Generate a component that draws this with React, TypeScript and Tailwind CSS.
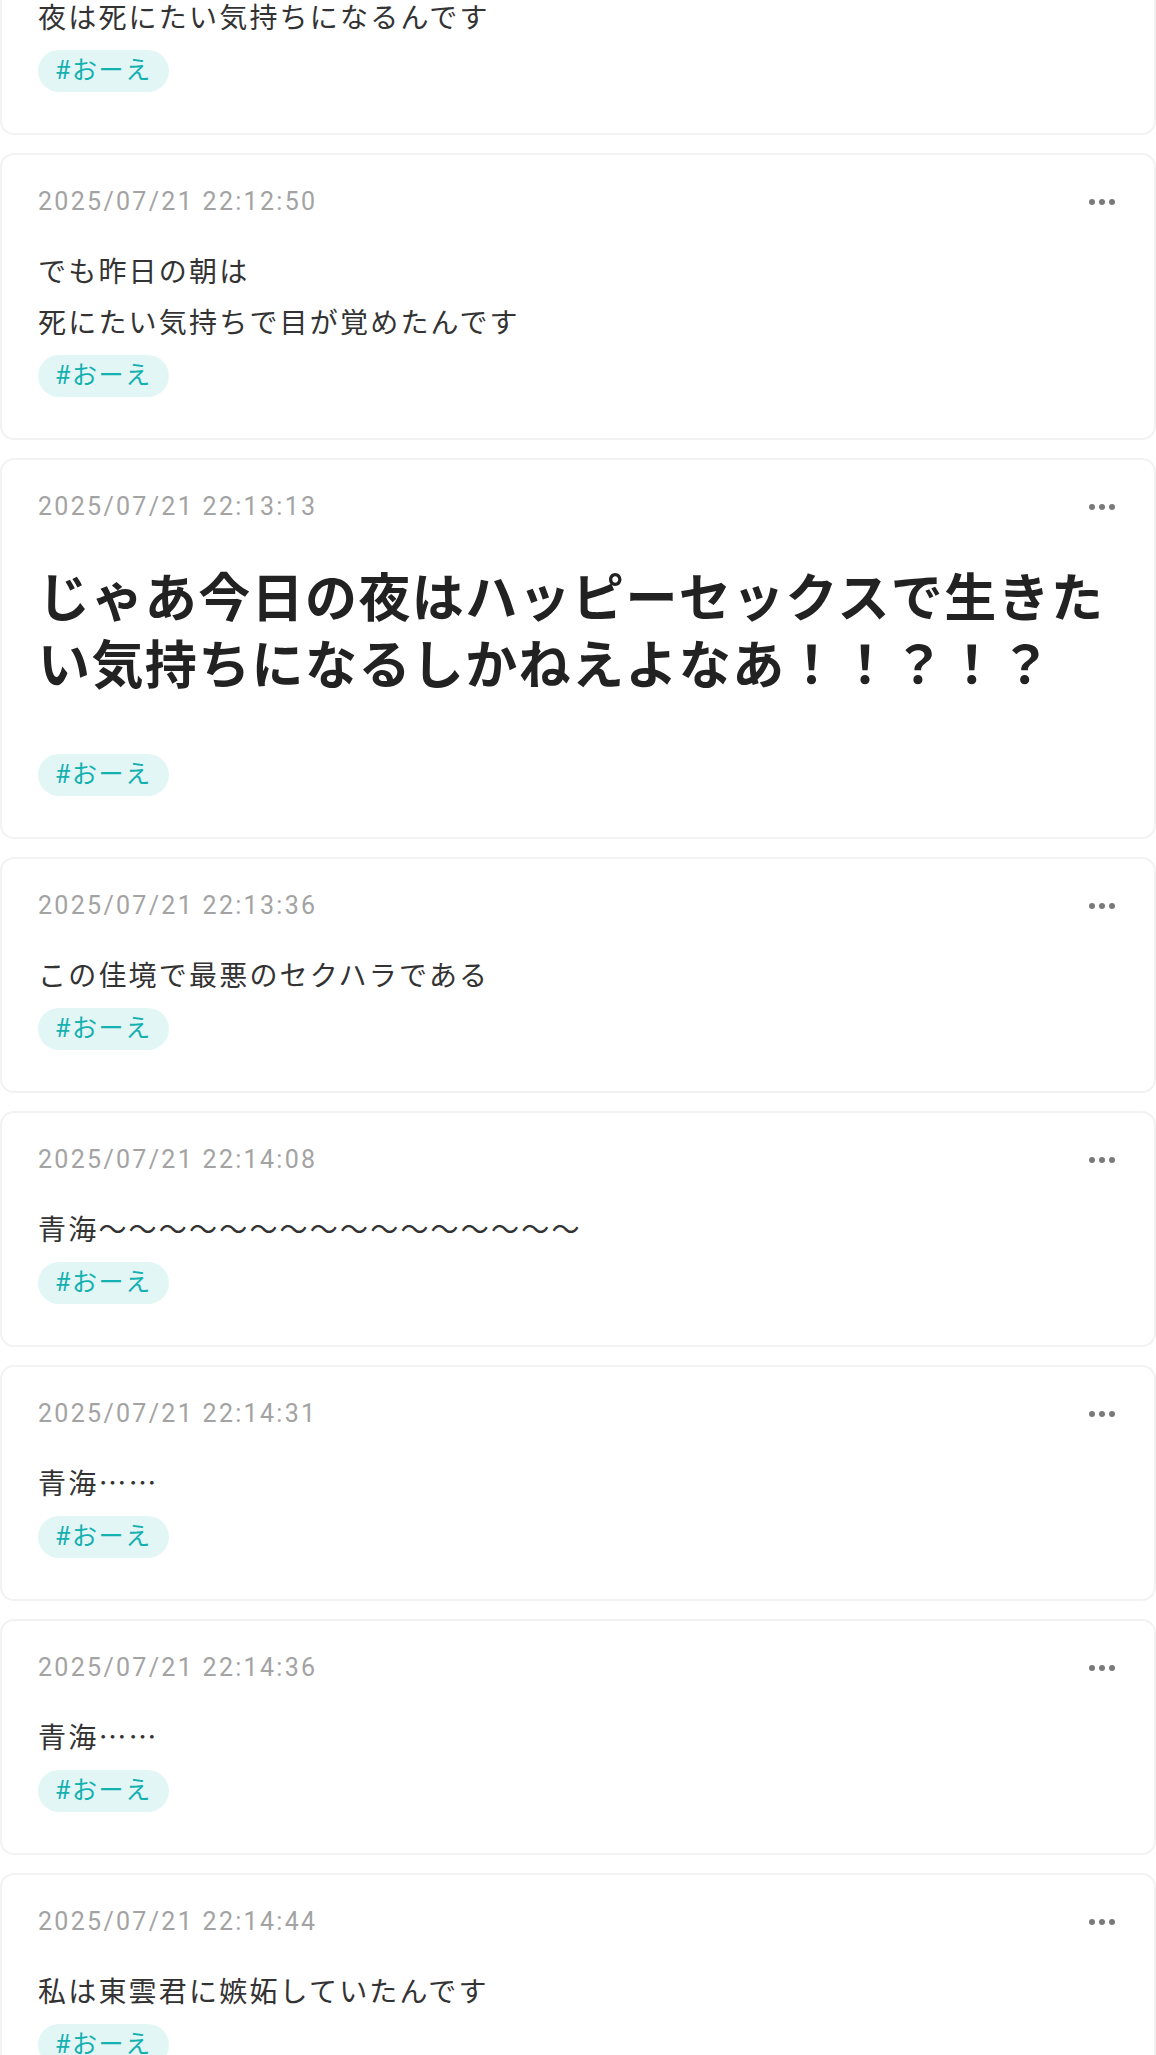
type Post = {
  time?: string;
  lines: string[];
  big?: boolean;
  tag: string;
};

const posts: Post[] = [
  { lines: ['夜は死にたい気持ちになるんです'], tag: '#おーえ' },
  { time: '2025/07/21 22:12:50', lines: ['でも昨日の朝は', '死にたい気持ちで目が覚めたんです'], tag: '#おーえ' },
  {
    time: '2025/07/21 22:13:13',
    lines: ['じゃあ今日の夜はハッピーセックスで生きたい気持ちになるしかねえよなあ！！？！？'],
    big: true,
    tag: '#おーえ',
  },
  { time: '2025/07/21 22:13:36', lines: ['この佳境で最悪のセクハラである'], tag: '#おーえ' },
  { time: '2025/07/21 22:14:08', lines: ['青海〜〜〜〜〜〜〜〜〜〜〜〜〜〜〜〜'], tag: '#おーえ' },
  { time: '2025/07/21 22:14:31', lines: ['青海……'], tag: '#おーえ' },
  { time: '2025/07/21 22:14:36', lines: ['青海……'], tag: '#おーえ' },
  { time: '2025/07/21 22:14:44', lines: ['私は東雲君に嫉妬していたんです'], tag: '#おーえ' },
];

function MoreIcon() {
  return (
    <svg width="28" height="8" viewBox="0 0 28 8" className="text-[#7a7a7a]">
      <circle cx="4" cy="4" r="3" fill="currentColor" />
      <circle cx="14" cy="4" r="3" fill="currentColor" />
      <circle cx="24" cy="4" r="3" fill="currentColor" />
    </svg>
  );
}

function PostCard({ post, first }: { post: Post; first?: boolean }) {
  return (
    <div
      className={`bg-white border-2 border-[#f2f2f2] rounded-[14px] px-[36px] pt-[29px] pb-[41px] ${first ? '-mt-[40px]' : ''}`}
    >
      {post.time && (
        <div className="flex items-center justify-between h-[36px]">
          <span className="font-['Roboto','Noto_Sans_CJK_JP',sans-serif] text-[25px] leading-[36px] tracking-[2.3px] text-[#a3a3a3]">
            {post.time}
          </span>
          <button className="mr-[2px] flex items-center">
            <MoreIcon />
          </button>
        </div>
      )}
      {post.big ? (
        <p className="mt-[36px] mb-[59px] text-[52px] leading-[67px] font-bold tracking-[1.4px] text-[#222222]">
          {post.lines[0]}
        </p>
      ) : (
        <div className={`${post.time ? 'mt-[25px]' : ''} mb-[8px] text-[28px] leading-[51px] tracking-[2.2px] text-[#333333]`}>
          {post.lines.map((l, i) => (
            <p key={i}>{l}</p>
          ))}
        </div>
      )}
      <div className="flex">
        <span className="rounded-full bg-[#e3f6f6] px-[17px] py-[4px] font-['Roboto','Noto_Sans_CJK_JP',sans-serif] text-[25px] leading-[34px] tracking-[1.6px] text-[#15b0b0]">
          {post.tag}
        </span>
      </div>
    </div>
  );
}

export default function App() {
  return (
    <div className="min-h-screen bg-white font-['Noto_Sans_CJK_JP','Roboto',sans-serif] overflow-hidden">
      <div className="flex flex-col gap-[18px]">
        {posts.map((p, i) => (
          <PostCard key={i} post={p} first={i === 0} />
        ))}
      </div>
    </div>
  );
}
